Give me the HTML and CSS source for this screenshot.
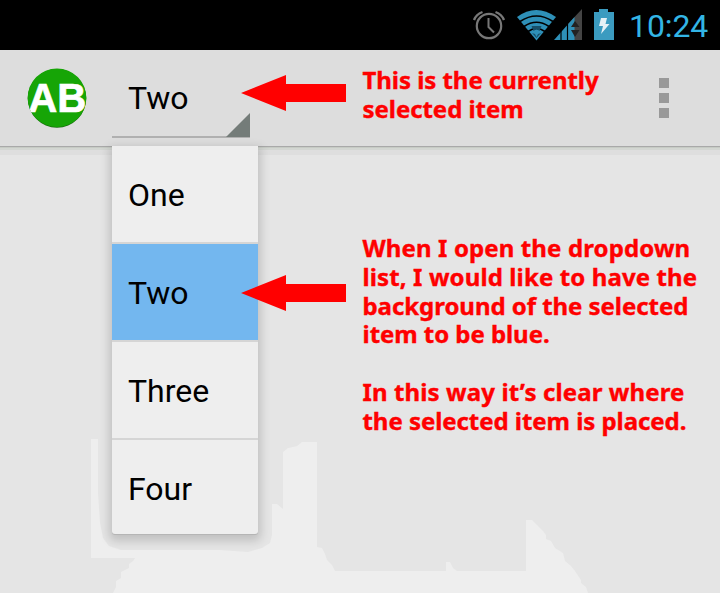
FILE: index.html
```html
<!DOCTYPE html>
<html lang="en">
<head>
<meta charset="utf-8">
<title>Dropdown</title>
<link rel="stylesheet" href="styles.css">
</head>
<body>
<div class="screen">
  <header class="status-bar">
    <svg class="status-icons" width="160" height="50" viewBox="0 0 160 50" aria-hidden="true">
      <g fill="none" stroke="#777" stroke-width="2.2">
        <circle cx="29" cy="26" r="12.2"/>
        <path d="M28.5 18v9l5.5 5.5" stroke-width="2"/>
        <path d="M14 20q2-5.500 8.500-8M35.500 12q6.500 2.500 8.500 8" stroke-width="2.400"/>
      </g>
      <path fill="#2e90b8" d="M57 17Q76 3 96 17L76.500 40.500Z"/>
      <path fill="none" stroke="#000" stroke-width="1.700" d="M60 21.500Q76.500 10.500 93 21.500M64 26.500Q76.500 18 89 26.500M68 31.500Q76.500 25.500 85 31.500"/>
      <path fill="#174f68" d="M71.500 26h10l-2 5-3-2-3 2ZM72 33l3 1 1.500 3 1.500-3 3-1-4.500 5Z"/>
      <path fill="#444" d="M107.500 24.500L122 9v31h-14.500Z"/>
      <path fill="#2e90b8" d="M94 40L114.500 17v23Z"/>
      <path stroke="#000" stroke-width="1.200" d="M101 31v9M107.500 24v16"/>
      <path fill="#222" d="M111 27l4-6 4.500 6ZM111 30h8.500l-4.500 7Z"/>
      <path fill="#3b9bc0" d="M134 12h5V9h9v3h6v28h-20Z"/>
      <path fill="#e5f1f6" d="M141 18h6l-1.500 6h4L141 34l2-8h-4Z"/>
    </svg>
    <time class="clock">10:24</time>
  </header>
  <nav class="action-bar">
    <svg class="logo" width="60" height="62" viewBox="0 0 60 62">
      <defs><clipPath id="disc"><circle cx="30" cy="30" r="29.500"/></clipPath></defs>
      <circle cx="30" cy="30.400" r="29.300" fill="#176d0d"/>
      <circle cx="30" cy="29.800" r="29.300" fill="#16a506"/>
      <text class="logo-text" x="30.200" y="44.300" text-anchor="middle" textLength="58" lengthAdjust="spacingAndGlyphs" clip-path="url(#disc)">AB</text>
    </svg>
    <div class="spinner">Two
      <svg class="spinner-corner" width="24" height="24" viewBox="0 0 24 24"><path fill="#747c79" d="M24 0v24H0Z"/></svg>
    </div>
    <div class="overflow"><i></i><i></i><i></i></div>
  </nav>
  <main class="content">
    <svg class="backdrop" width="720" height="446" viewBox="0 147 720 446" aria-hidden="true">
      <path fill="#eee" d="M91 439h7v54l2 30 3 15 6 8 12 4h98l29 2 14-4 8-5 2-8V504h5l6 5V452l5-4 9-2 5-4h15V547l5 1 3 6 2 6 5 5 3 6H446V562h4l3 6 4 3H526V520h6l5 5 6 6 3 4v4l5 2 4 7 8 5 2 8 6 5 4 5 6 9v3l5 4 2 6H113l3-6v-6l5-3v-6l8-4v-4l4-3 2-3H91Z"/>
    </svg>
    <ul class="menu">
      <li>One</li>
      <li class="selected">Two</li>
      <li>Three</li>
      <li>Four</li>
    </ul>
  </main>
  <svg class="arrow arrow-top" width="106" height="38" viewBox="0 0 106 38"><path d="M0 19L45 1v9h60v18H45v9Z"/></svg>
  <svg class="arrow arrow-list" width="106" height="38" viewBox="0 0 106 38"><path d="M0 19L45 1v9h60v18H45v9Z"/></svg>
  <p class="note note-top">This is the currently<br>selected item</p>
  <p class="note note-list"><span class="loose">When I open the dropdown</span><br><span class="loose">list, I would like to have the</span><br>background of the selected<br>item to be blue.<br><br><span class="loose">In this way it’s clear where</span><br>the selected item is placed.</p>
</div>
</body>
</html>
```

FILE: styles.css
```css
* { box-sizing: border-box; }
body { margin: 0; }
.screen {
  position: relative;
  width: 720px;
  height: 593px;
  overflow: hidden;
  background: #e5e5e5;
  font-family: Roboto, "Liberation Sans", sans-serif;
  font-size: 32px;
  color: #000;
}
.status-bar {
  display: flex;
  justify-content: flex-end;
  height: 50px;
  padding-right: 11px;
  background: #000;
}
.clock { width: 80px; margin-left: 9px; line-height: 52px; color: #33b5e5; white-space: nowrap; letter-spacing: -.1px; }
.action-bar {
  position: relative;
  display: flex;
  height: 97px;
  padding-left: 27px;
  background: #ddd;
  border-bottom: 1px solid #a9a9a9;
  box-shadow: 0 1px 0 #c6cbc4, 0 3px 0 #d3d6d2, 0 8px 0 #dedede;
}
.logo { margin-top: 18px; }
.logo-text { font: bold 41px "Liberation Sans", sans-serif; fill: #fff; stroke: #fff; stroke-width: .7px; }
.spinner {
  position: relative;
  width: 138px;
  height: 88px;
  margin-left: 25px;
  padding-left: 16px;
  line-height: 96px;
  border-bottom: 2px solid #b0b0b0;
}
.spinner-corner { position: absolute; right: 0; bottom: -1px; }
.overflow {
  display: flex;
  flex-direction: column;
  gap: 5px;
  margin: 28px 51px 0 auto;
}
.overflow i { width: 10px; height: 10px; background: #999; }
.content { position: relative; height: 446px; padding-left: 112px; }
.backdrop { position: absolute; left: 0; top: 0; }
.menu {
  position: relative;
  display: inline-block;
  vertical-align: top;
  width: 146px;
  margin: -1px 0 0;
  padding: 0;
  list-style: none;
  background: #eee;
  border-radius: 0 0 3px 3px;
  box-shadow: 0 1px 0 #b5b5b5, 0 4px 10px 3px rgba(0, 0, 0, .16);
}
.menu li {
  height: 98px;
  padding-left: 16px;
  line-height: 98px;
  border-bottom: 2px solid #d5d5d5;
}
.menu li:last-child { height: 94px; border: 0; }
.menu .selected { background: #73b7ef; }
.arrow { position: absolute; left: 241px; fill: #f00; }
.arrow-top { top: 74px; }
.arrow-list { top: 274px; }
.note {
  position: absolute;
  left: 362.5px;
  margin: 0;
  font: bold 24px/28.8px "Noto Sans", sans-serif;
  letter-spacing: -.05px;
  color: #f00;
  -webkit-text-stroke: .4px #f00;
  white-space: nowrap;
}
.note .loose { letter-spacing: .12px; }
.note-top { top: 66px; }
.note-list { top: 234px; }
```
